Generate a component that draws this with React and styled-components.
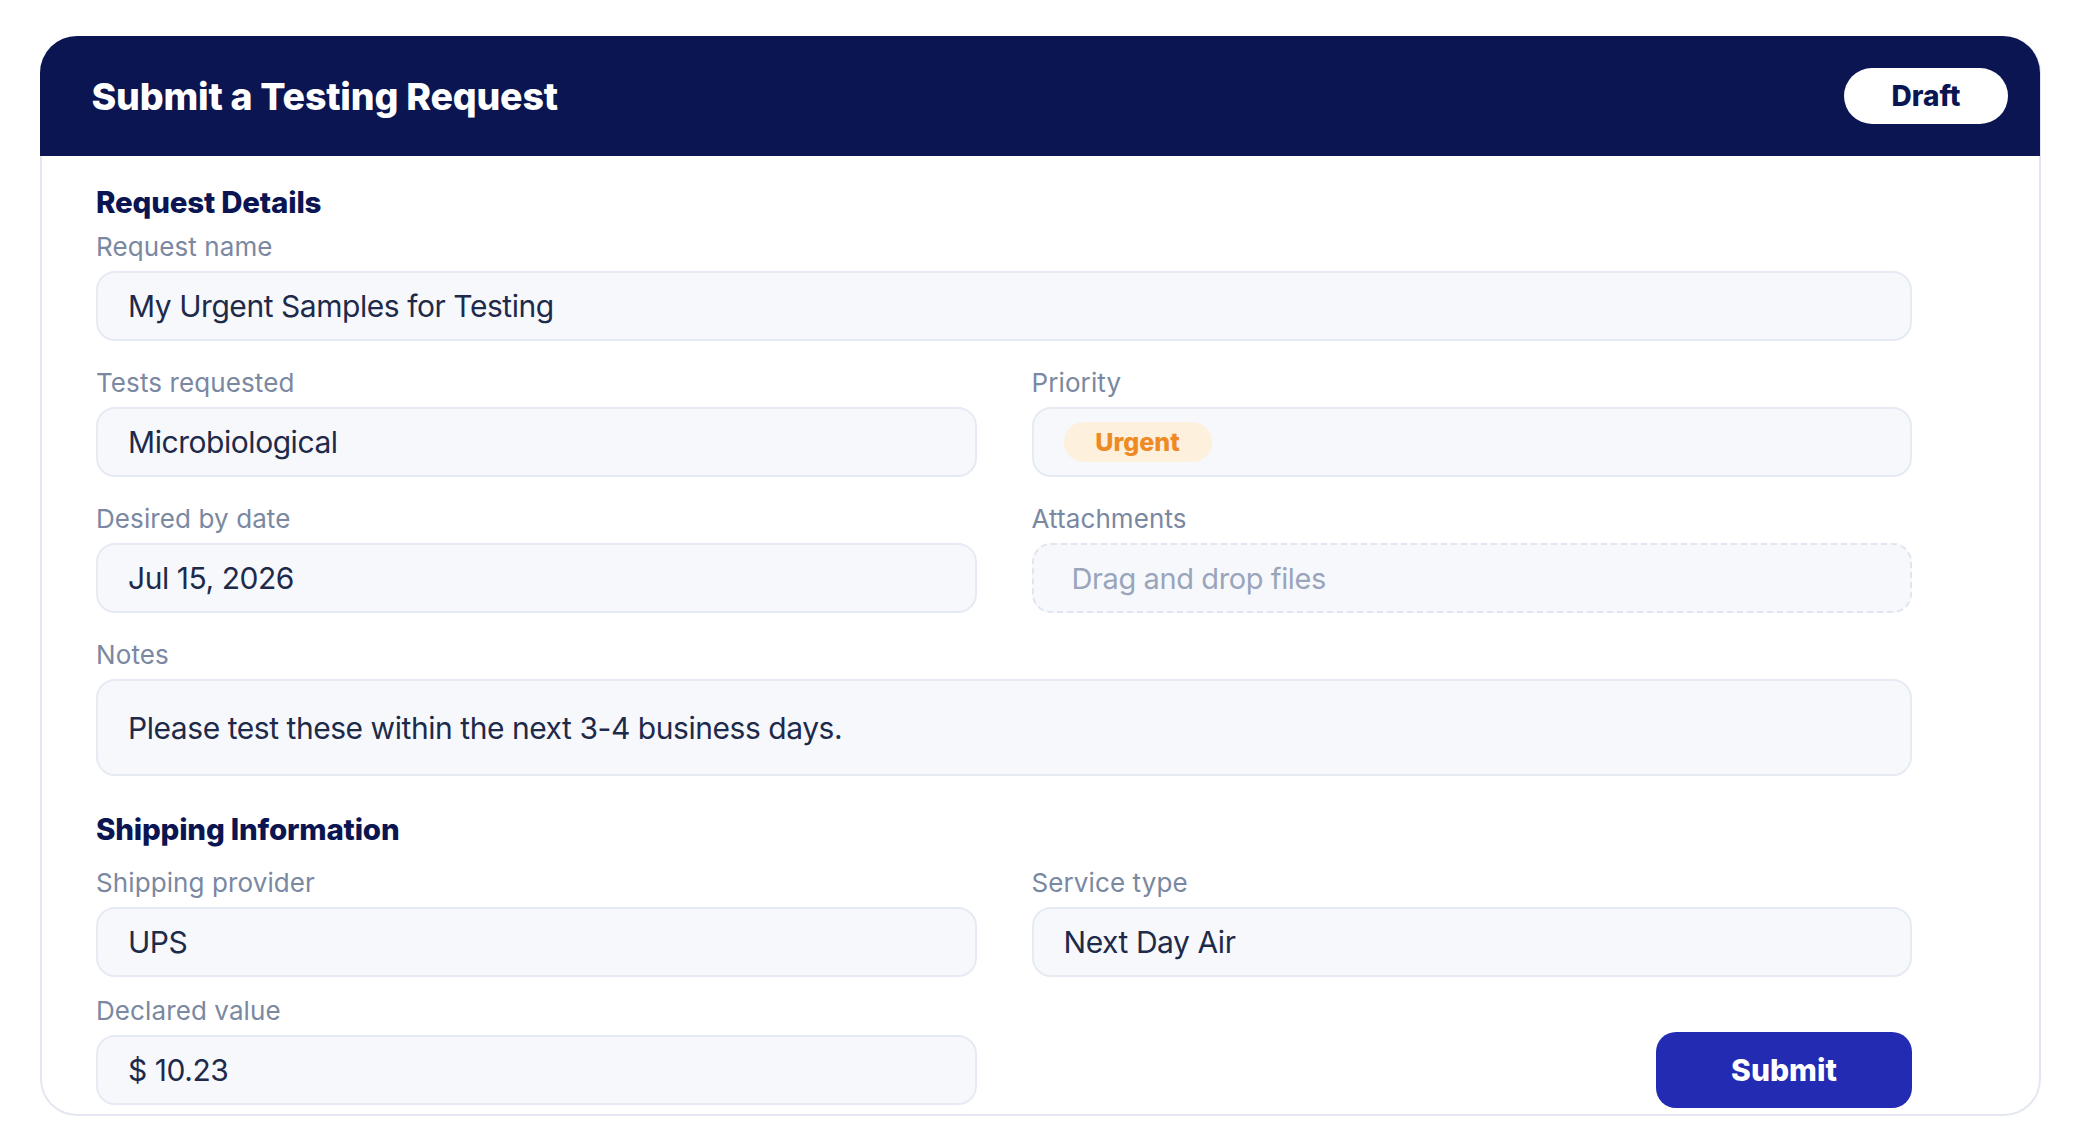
import React from "react";
import styled, { createGlobalStyle } from "styled-components";

const Global = createGlobalStyle`
  html, body { margin: 0; padding: 0; background: #ffffff; }
  body { font-family: Inter, "Noto Sans", "Liberation Sans", sans-serif; -webkit-font-smoothing: antialiased; }
`;

const Page = styled.div`
  width: 2080px;
  height: 1136px;
  padding: 36px 39px 19px 40px;
  box-sizing: border-box;
  overflow: hidden;
`;

const Card = styled.section`
  height: 1080px;
  box-sizing: border-box;
  border: 2.5px solid #e4e7f2;
  border-top: 0;
  border-radius: 37px;
  background: #ffffff;
  display: flex;
  flex-direction: column;
`;

const Header = styled.header`
  height: 120px;
  margin: 0 -1px 0 -2.5px;
  flex: none;
  background: #0a1551;
  border-radius: 37px 37px 0 0;
  display: flex;
  align-items: center;
  justify-content: space-between;
  padding: 0 32px 0 52px;
`;

const Title = styled.h1`
  margin: 0;
  color: #ffffff;
  font-size: 37.5px;
  font-weight: 800;
  letter-spacing: -0.2px;
`;

const Status = styled.span`
  width: 164px;
  height: 56px;
  border-radius: 28px;
  background: #ffffff;
  color: #0a1551;
  font-size: 28px;
  font-weight: 800;
  display: flex;
  align-items: center;
  justify-content: center;
`;

const Body = styled.div`
  padding: 0 127px 0 54px;
  display: flex;
  flex-direction: column;
`;

const SectionTitle = styled.h2`
  margin: ${(p) => p.$top}px 0 ${(p) => p.$bottom}px;
  height: 40px;
  line-height: 40px;
  color: #0a1551;
  font-size: 29.5px;
  font-weight: 800;
  letter-spacing: -0.2px;
`;

const Grid = styled.div`
  display: grid;
  grid-template-columns: 1fr 1fr;
  column-gap: 55px;
  row-gap: ${(p) => p.$rowGap}px;
`;

const Group = styled.div`
  grid-column: ${(p) => (p.$wide ? "1 / -1" : "auto")};
  display: flex;
  flex-direction: column;
`;

const Label = styled.label`
  height: 40px;
  margin-bottom: 4px;
  line-height: 40px;
  color: #7a88a1;
  font-size: 26px;
  font-weight: 400;
  letter-spacing: 0.1px;
`;

const Field = styled.div`
  height: ${(p) => p.$height || 70}px;
  box-sizing: border-box;
  border: 2px solid #e6eaf3;
  border-radius: 19px;
  background: #f6f8fc;
  color: #1e2a4a;
  font-size: 30px;
  font-weight: 400;
  letter-spacing: -0.45px;
  display: flex;
  align-items: center;
  padding: 0 30px;
`;

const DropField = styled(Field)`
  border-style: dashed;
  border-color: #e1e5f0;
  color: #9aa5bb;
  font-size: 29px;
  letter-spacing: -0.4px;
  padding-left: 38px;
`;

const Chip = styled.span`
  width: 148px;
  height: 40px;
  border-radius: 20px;
  background: #fdf0dc;
  color: #ee8a26;
  font-size: 25px;
  font-weight: 800;
  letter-spacing: 0;
  display: flex;
  align-items: center;
  justify-content: center;
`;

const SubmitCell = styled.div`
  display: flex;
  justify-content: flex-end;
  align-items: flex-end;
  margin-bottom: -3px;
`;

const Submit = styled.button`
  width: 256px;
  height: 76px;
  border: 0;
  border-radius: 20px;
  background: #242bb3;
  color: #ffffff;
  font-family: inherit;
  font-size: 30px;
  font-weight: 800;
`;

export default function App() {
  return (
    <Page>
      <Global />
      <Card>
        <Header>
          <Title>Submit a Testing Request</Title>
          <Status>Draft</Status>
        </Header>
        <Body>
          <SectionTitle $top={26} $bottom={5}>Request Details</SectionTitle>
          <Grid $rowGap={22}>
            <Group $wide>
              <Label>Request name</Label>
              <Field>My Urgent Samples for Testing</Field>
            </Group>
            <Group>
              <Label>Tests requested</Label>
              <Field>Microbiological</Field>
            </Group>
            <Group>
              <Label>Priority</Label>
              <Field><Chip>Urgent</Chip></Field>
            </Group>
            <Group>
              <Label>Desired by date</Label>
              <Field>Jul 15, 2026</Field>
            </Group>
            <Group>
              <Label>Attachments</Label>
              <DropField>Drag and drop files</DropField>
            </Group>
            <Group $wide>
              <Label>Notes</Label>
              <Field $height={97}>Please test these within the next 3-4 business days.</Field>
            </Group>
          </Grid>
          <SectionTitle $top={33} $bottom={14}>Shipping Information</SectionTitle>
          <Grid $rowGap={14}>
            <Group>
              <Label>Shipping provider</Label>
              <Field>UPS</Field>
            </Group>
            <Group>
              <Label>Service type</Label>
              <Field>Next Day Air</Field>
            </Group>
            <Group>
              <Label>Declared value</Label>
              <Field>$ 10.23</Field>
            </Group>
            <SubmitCell>
              <Submit>Submit</Submit>
            </SubmitCell>
          </Grid>
        </Body>
      </Card>
    </Page>
  );
}
